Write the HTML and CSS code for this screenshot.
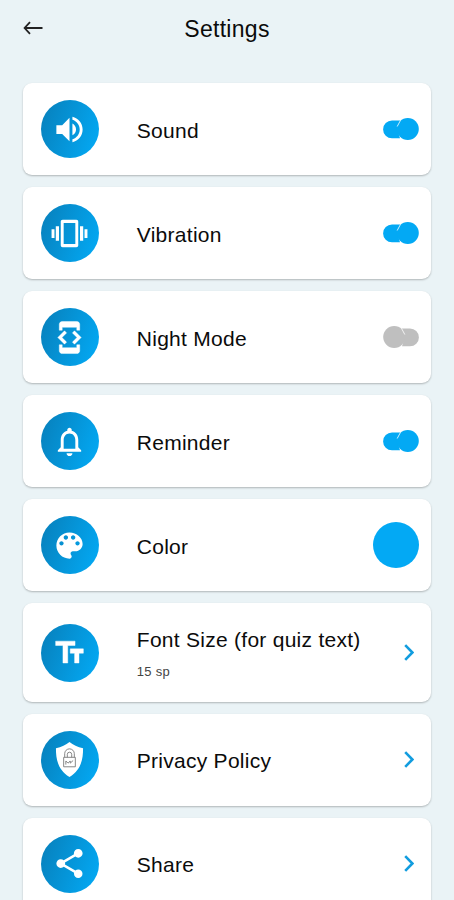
FILE: index.html
```html
<!DOCTYPE html>
<html lang="en">
<head>
  <meta charset="UTF-8" />
  <meta name="viewport" content="width=device-width, initial-scale=1.0" />
  <title>Settings</title>
  <link rel="stylesheet" href="styles.css">
</head>
<body>
  <header>
    <svg class="back" viewBox="0 0 20 14"><path d="M7 1.2L1.6 7L7 12.8M2 7H19.5" /></svg>
    <h1>Settings</h1>
  </header>

  <main class="settings">
    <div class="card">
      <div class="icon">
        <svg viewBox="0 0 24 24"><path d="M3 9v6h4l5 5V4L7 9H3zm13.5 3c0-1.77-1.02-3.29-2.5-4.03v8.05c1.48-.73 2.5-2.25 2.5-4.02zM14 3.23v2.06c2.89.86 5 3.54 5 6.71s-2.11 5.85-5 6.71v2.06c4.01-.91 7-4.49 7-8.77s-2.99-7.86-7-8.77z" /></svg>
      </div>
      <div class="label">Sound</div>
      <svg class="toggle on" viewBox="0 0 36 22"><path d="M9 2.5H18L14 10L17 20.3H9A8.900 8.900 0 0 1 9 2.500z" /><circle cx="24.8" cy="11" r="11" /><path class="notch" d="M17.600 2.200L14.200 8.500" /></svg>
    </div>

    <div class="card">
      <div class="icon">
        <svg viewBox="0 0 24 24"><path d="M-.3 15h2V9h-2v6zm2.900 2h2.200V7H2.600v10zm19.700-8v6h2V9h-2zm-3.100 8h2.200V7h-2.200v10zM16.700 2.600H7.300C6.500 2.600 6 3.100 6 3.900v16.200c0 .8.5 1.300 1.300 1.300h9.400c.8 0 1.300-.5 1.300-1.300V3.900c0-.8-.5-1.300-1.300-1.300zM16 19.200H8V4.800h8v14.400z" /></svg>
      </div>
      <div class="label">Vibration</div>
      <svg class="toggle on" viewBox="0 0 36 22"><path d="M9 2.5H18L14 10L17 20.3H9A8.900 8.900 0 0 1 9 2.500z" /><circle cx="24.8" cy="11" r="11" /><path class="notch" d="M17.600 2.200L14.200 8.500" /></svg>
    </div>

    <div class="card">
      <div class="icon">
        <svg class="bold" viewBox="0 0 24 24"><path d="M7 5h10v2h2V3c0-1.100-.9-1.990-2-1.990L7 1c-1.100 0-2 .9-2 2v4h2V5zm8.410 11.590L20 12l-4.590-4.590L14 8.830 17.170 12 14 15.170l1.410 1.420zM10 15.170L6.830 12 10 8.830 8.590 7.410 4 12l4.590 4.590L10 15.170zM17 19H7v-2H5v4c0 1.100.9 2 2 2h10c1.100 0 2-.9 2-2v-4h-2v2z" /></svg>
      </div>
      <div class="label">Night Mode</div>
      <svg class="toggle off" viewBox="0 0 36 22"><path d="M27 2.500H18L22 10L19 20.300H27A8.900 8.900 0 0 0 27 2.500z" /><circle cx="11.2" cy="11" r="11" /><path class="notch" d="M18.400 2.200L21.800 8.500" /></svg>
    </div>

    <div class="card">
      <div class="icon">
        <svg viewBox="0 0 24 24"><path d="M12 22c1.100 0 2-.9 2-2h-4c0 1.100.9 2 2 2zm6-6v-5c0-3.070-1.630-5.640-4.500-6.320V4c0-.83-.67-1.500-1.500-1.500s-1.500.67-1.500 1.500v.68C7.640 5.360 6 7.920 6 11v5l-2 2v1h16v-1l-2-2zm-2 1H8v-6c0-2.480 1.510-4.500 4-4.500s4 2.020 4 4.500v6z" /></svg>
      </div>
      <div class="label">Reminder</div>
      <svg class="toggle on" viewBox="0 0 36 22"><path d="M9 2.5H18L14 10L17 20.3H9A8.900 8.900 0 0 1 9 2.500z" /><circle cx="24.8" cy="11" r="11" /><path class="notch" d="M17.600 2.200L14.200 8.500" /></svg>
    </div>

    <div class="card">
      <div class="icon">
        <svg viewBox="0 0 24 24"><path d="M12 3c-4.970 0-9 4.030-9 9s4.030 9 9 9c.83 0 1.500-.67 1.500-1.500 0-.39-.15-.74-.39-1.010-.23-.26-.38-.61-.38-.99 0-.83.67-1.500 1.500-1.500H16c2.760 0 5-2.240 5-5 0-4.420-4.030-8-9-8zm-5.500 9c-.83 0-1.500-.67-1.500-1.500S5.670 9 6.500 9 8 9.670 8 10.500 7.330 12 6.500 12zm3-4C8.670 8 8 7.330 8 6.500S8.670 5 9.500 5s1.500.67 1.500 1.500S10.330 8 9.500 8zm5 0c-.83 0-1.500-.67-1.500-1.500S13.670 5 14.500 5s1.500.67 1.500 1.500S15.330 8 14.500 8zm3 4c-.83 0-1.500-.67-1.500-1.500S16.670 9 17.500 9s1.500.67 1.500 1.500-.67 1.500-1.500 1.500z" /></svg>
      </div>
      <div class="label">Color</div>
      <div class="swatch"></div>
    </div>

    <div class="card tall">
      <div class="icon">
        <svg class="bold" viewBox="0 0 24 24"><path d="M2.500 4.200v3h5v12h3.300v-12h5v-3H2.500zm19 5.300h-9v3h3v6.700h3v-6.700h3v-3z" /></svg>
      </div>
      <div class="label">
        Font Size (for quiz text)
        <small>15 sp</small>
      </div>
      <svg class="chevron" viewBox="0 0 10 17"><path d="M1.200 1.200L8.400 8.500L1.200 15.800" /></svg>
    </div>

    <div class="card">
      <div class="icon">
        <svg viewBox="0 0 24 24">
          <path d="M12 0C9.500 2 6.500 3.400 2.700 4.300C2.700 12 4 19 12 24C20 19 21.300 12 21.300 4.300C17.500 3.400 14.500 2 12 0z" />
          <path class="lock" d="M8 10.500H16V17H8zM8.700 10.500V8A3.300 3.300 0 0 1 15.300 8V10.500M10.500 10.500V8.500A1.500 1.500 0 0 1 13.500 8.500V10.500M9.500 15.500V13L11 14.500L12.500 13V14.500L14.500 12.700" />
        </svg>
      </div>
      <div class="label">Privacy Policy</div>
      <svg class="chevron" viewBox="0 0 10 17"><path d="M1.200 1.200L8.400 8.500L1.200 15.800" /></svg>
    </div>

    <div class="card">
      <div class="icon">
        <svg viewBox="0 0 24 24"><path d="M18 16.080c-.76 0-1.440.3-1.960.77L8.910 12.700c.05-.23.09-.46.09-.7s-.04-.47-.09-.7l7.050-4.110c.54.5 1.250.81 2.040.81 1.660 0 3-1.340 3-3s-1.340-3-3-3-3 1.340-3 3c0 .24.04.47.09.7L8.040 9.810C7.500 9.310 6.790 9 6 9c-1.660 0-3 1.340-3 3s1.340 3 3 3c.79 0 1.500-.31 2.040-.81l7.120 4.160c-.05.21-.08.43-.08.65 0 1.610 1.310 2.920 2.920 2.920s2.920-1.310 2.920-2.920-1.310-2.920-2.920-2.920z" /></svg>
      </div>
      <div class="label">Share</div>
      <svg class="chevron" viewBox="0 0 10 17"><path d="M1.200 1.200L8.400 8.500L1.200 15.800" /></svg>
    </div>
  </main>
</body>
</html>
```

FILE: styles.css
```css
:root {
  --primary: #03a9f4;
  --primary-dark: #0781bd;
  --page-bg: #eaf3f6;
  --off: #bfbfbf;
}

* {
  box-sizing: border-box;
}

body {
  margin: 0;
  height: 100vh;
  overflow: hidden;
  font-family: "Liberation Sans", Arial, sans-serif;
  background: var(--page-bg);
  color: #0b0b0b;
}

header {
  display: grid;
  grid-template-columns: 20px 1fr 20px;
  align-items: center;
  height: 58px;
  padding: 0 23px;
}

header h1 {
  margin: 0;
  font-size: 23px;
  font-weight: 400;
  letter-spacing: 0.3px;
  text-align: center;
}

.back {
  width: 20px;
  height: 14px;
  margin-top: -2px;
  fill: none;
  stroke: #222;
  stroke-width: 1.8;
}

.settings {
  display: flex;
  flex-direction: column;
  gap: 12px;
  padding: 25.400px 22.600px 0 23.400px;
}

.card {
  display: flex;
  align-items: center;
  flex-shrink: 0;
  height: 92px;
  padding: 0 12.400px 0 17.400px;
  border-radius: 9px;
  background: #fff;
  box-shadow: 0 1px 2px rgba(0, 0, 0, 0.25);
}

.card.tall {
  height: 98.600px;
}

.icon {
  display: flex;
  align-items: center;
  justify-content: center;
  width: 58px;
  height: 58px;
  margin-right: 38px;
  border-radius: 50%;
  background: linear-gradient(110deg, var(--primary-dark) 5%, var(--primary) 95%);
}

.icon svg {
  width: 35px;
  height: 35px;
  overflow: visible;
  fill: #fff;
}

.icon .bold {
  stroke: #fff;
  stroke-width: 0.3;
}

.icon .lock {
  fill: none;
  stroke: #777;
  stroke-width: 0.6;
}

.label {
  flex: 1;
  padding-top: 3px;
  font-size: 21px;
  line-height: 24px;
  letter-spacing: 0.27px;
  white-space: nowrap;
}

.label small {
  display: block;
  margin-top: 9px;
  font-size: 13px;
  line-height: 22px;
  letter-spacing: 0.3px;
  color: #444;
}

.tall .label {
  padding-top: 5px;
}

.toggle {
  width: 36px;
  height: 22px;
}

.toggle.on {
  fill: var(--primary);
}

.toggle.off {
  fill: var(--off);
}

.toggle .notch {
  fill: none;
  stroke: #fff;
  stroke-width: 1;
  opacity: 0.8;
}

.swatch {
  width: 46px;
  height: 46px;
  border-radius: 50%;
  background: var(--primary);
}

.chevron {
  width: 10px;
  height: 17px;
  margin-right: 5px;
  fill: none;
  stroke: #129ddf;
  stroke-width: 2.6;
}
```
